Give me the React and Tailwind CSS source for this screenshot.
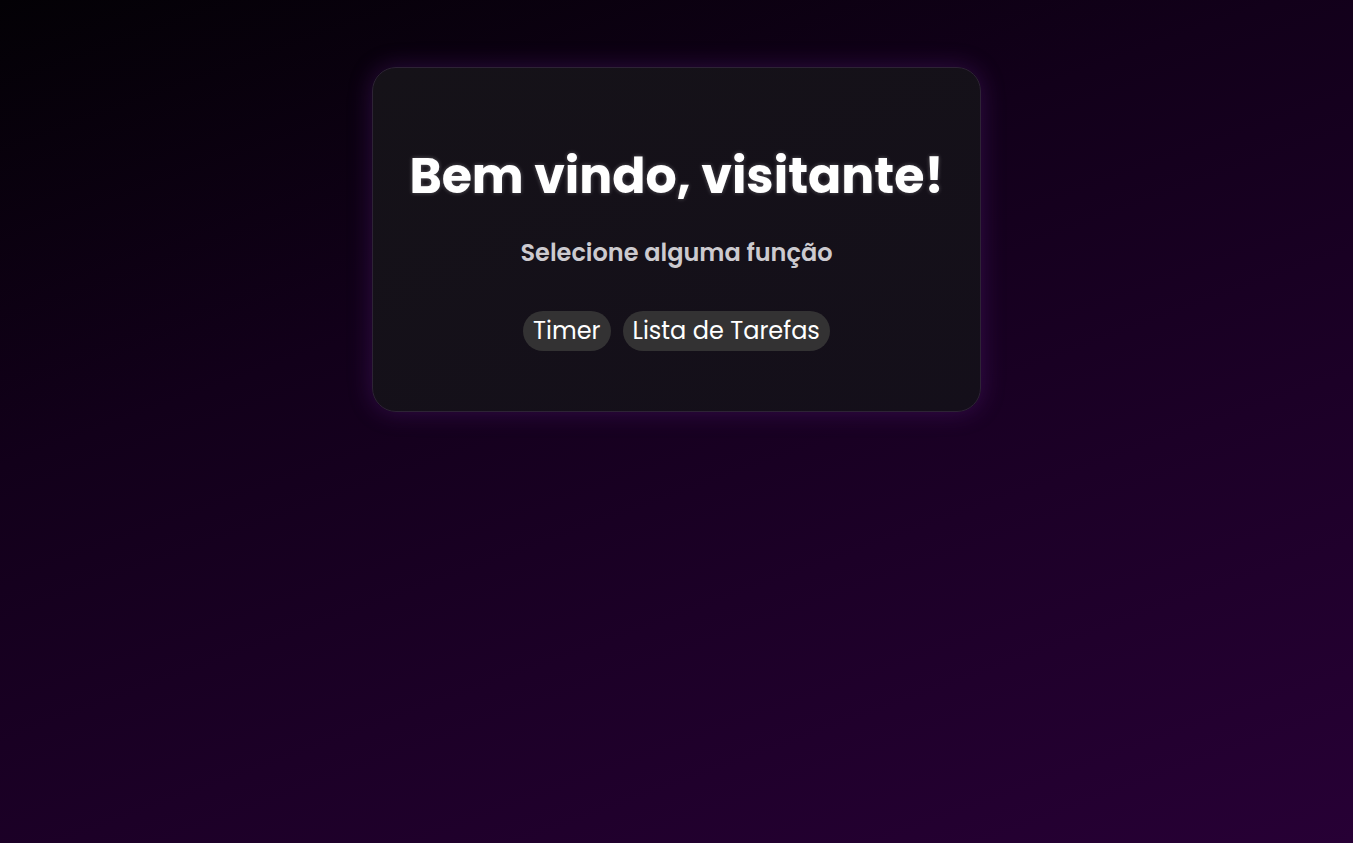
export default function App() {
  const font = { fontFamily: '"Poppins", "Noto Sans", "Open Sans", sans-serif' }
  return (
    <div
      className="min-h-screen w-full bg-[linear-gradient(160deg,#030105_0%,#12001a_35%,#1c0027_65%,#270035_100%)] flex justify-center pt-[67px]"
      style={font}
    >
      <div className="w-[609px] h-[345px] rounded-[24px] border border-[#2d2335] bg-[linear-gradient(160deg,#151218_0%,#140f1a_100%)] shadow-[0_0_24px_rgba(120,40,170,0.3)] flex flex-col items-center pt-[72px]">
        <h1 className="text-[49px] leading-[72px] font-bold text-white [text-shadow:0_0_4px_rgba(255,255,255,0.3)]">
          Bem vindo, visitante!
        </h1>
        <p className="mt-[25px] text-[24px] leading-8 font-semibold text-[#cccacf]">
          Selecione alguma função
        </p>
        <div className="mt-[42px] flex gap-3">
          <button className="h-10 px-[10px] rounded-full bg-[#333233] text-white text-[24px] leading-10">
            Timer
          </button>
          <button className="h-10 px-[10px] rounded-full bg-[#333233] text-white text-[24px] leading-10">
            Lista de Tarefas
          </button>
        </div>
      </div>
    </div>
  )
}
